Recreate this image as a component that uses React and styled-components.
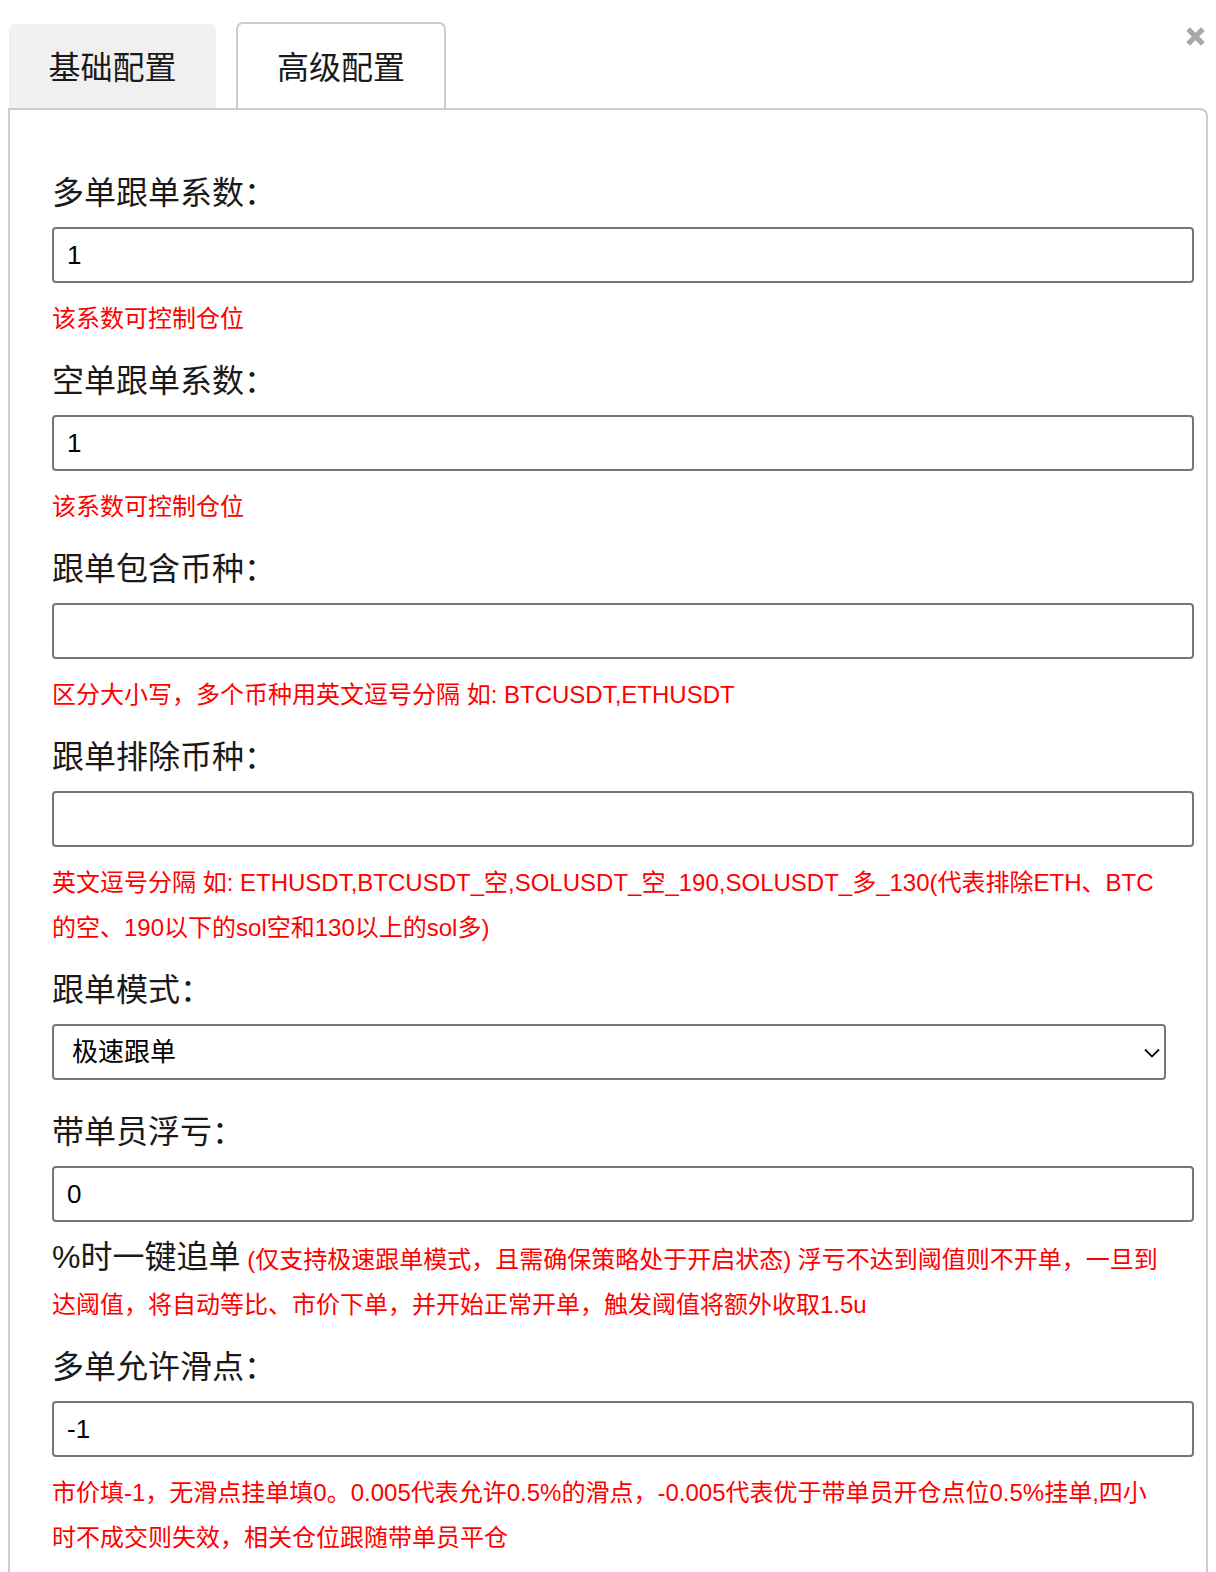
import React, { useState } from "react";
import styled, { createGlobalStyle } from "styled-components";

const GlobalStyle = createGlobalStyle`
  html, body {
    margin: 0;
    padding: 0;
    background: #fff;
  }
  body {
    font-family: "Liberation Sans", "Noto Sans CJK SC", sans-serif;
    color: #1a1a1a;
  }
`;

const Wrap = styled.div`
  position: relative;
  padding: 22px 8px 0 8px;
`;

const CloseBtn = styled.button`
  position: absolute;
  top: 26px;
  right: 10px;
  width: 21px;
  height: 21px;
  padding: 0;
  border: none;
  background: none;
  cursor: pointer;
`;

const Tabs = styled.div`
  display: flex;
  align-items: flex-end;
  gap: 20px;
  padding-left: 1px;
`;

const Tab = styled.div`
  box-sizing: border-box;
  display: flex;
  align-items: center;
  justify-content: center;
  width: ${(p) => (p.active ? "210px" : "207px")};
  height: ${(p) => (p.active ? "86px" : "84px")};
  padding-bottom: 2px;
  font-size: 32px;
  color: #1a1a1a;
  border-radius: 7px 7px 0 0;
  background: ${(p) => (p.active ? "#fff" : "#f0f0f0")};
  border: ${(p) => (p.active ? "2px solid #cccccc" : "none")};
  border-bottom: none;
  cursor: pointer;
`;

const Panel = styled.div`
  border: 2px solid #cccccc;
  border-bottom: none;
  border-top-right-radius: 8px;
  padding: 59px 40px 40px 42px;
`;

const Field = styled.div`
  margin-bottom: ${(p) => p.gap || 16}px;
`;

const Label = styled.div`
  font-size: 32px;
  line-height: 48px;
  margin-bottom: 10px;
  color: #1a1a1a;
`;

const Input = styled.input`
  display: block;
  box-sizing: border-box;
  width: calc(100% + 28px);
  height: 56px;
  padding: 0 13px;
  border: 2px solid #767676;
  border-radius: 4px;
  font-family: "Liberation Sans", "Noto Sans CJK SC", sans-serif;
  font-size: 26px;
  color: #000;
  background: #fff;
  outline: none;
`;

const SelectBox = styled.div`
  position: relative;
  width: 100%;
`;

const Select = styled.select`
  display: block;
  box-sizing: border-box;
  width: 100%;
  height: 56px;
  padding: 0 18px;
  border: 2px solid #767676;
  border-radius: 4px;
  appearance: none;
  font-family: "Liberation Sans", "Noto Sans CJK SC", sans-serif;
  font-size: 26px;
  color: #000;
  background: #fff;
  outline: none;
`;

const Chevron = styled.svg`
  position: absolute;
  right: 6px;
  top: 24px;
  pointer-events: none;
`;

const Hint = styled.div`
  margin-top: 13px;
  font-size: 24px;
  line-height: 45px;
  color: #ff0000;
`;

const Strong = styled.span`
  font-size: 32px;
  color: #1a1a1a;
`;

const fields = [
  { label: "多单跟单系数：", value: "1", hint: "该系数可控制仓位" },
  { label: "空单跟单系数：", value: "1", hint: "该系数可控制仓位" },
  {
    label: "跟单包含币种：",
    value: "",
    hint: "区分大小写，多个币种用英文逗号分隔 如: BTCUSDT,ETHUSDT",
  },
  {
    label: "跟单排除币种：",
    value: "",
    hint: "英文逗号分隔 如: ETHUSDT,BTCUSDT_空,SOLUSDT_空_190,SOLUSDT_多_130(代表排除ETH、BTC的空、190以下的sol空和130以上的sol多)",
  },
];

export default function App() {
  const [tab, setTab] = useState(1);
  const [mode, setMode] = useState("fast");

  return (
    <Wrap>
      <GlobalStyle />
      <CloseBtn aria-label="close">
        <svg width="21" height="21" viewBox="0 0 20 20">
          <path
            d="M3 3 L17 17 M17 3 L3 17"
            stroke="#a9a9a9"
            strokeWidth="5"
            strokeLinecap="butt"
          />
        </svg>
      </CloseBtn>

      <Tabs>
        <Tab active={tab === 0} onClick={() => setTab(0)}>
          基础配置
        </Tab>
        <Tab active={tab === 1} onClick={() => setTab(1)}>
          高级配置
        </Tab>
      </Tabs>

      <Panel>
        {fields.map((f) => (
          <Field key={f.label}>
            <Label>{f.label}</Label>
            <Input defaultValue={f.value} />
            <Hint>{f.hint}</Hint>
          </Field>
        ))}

        <Field gap={28}>
          <Label>跟单模式：</Label>
          <SelectBox>
            <Select value={mode} onChange={(e) => setMode(e.target.value)}>
              <option value="fast">极速跟单</option>
              <option value="normal">普通跟单</option>
            </Select>
            <Chevron width="16" height="10" viewBox="0 0 16 10">
              <path
                d="M1 1.5 L8 8.5 L15 1.5"
                fill="none"
                stroke="#111"
                strokeWidth="1.8"
              />
            </Chevron>
          </SelectBox>
        </Field>

        <Field>
          <Label>带单员浮亏：</Label>
          <Input defaultValue="0" />
          <Hint>
            <Strong>%时一键追单</Strong> (仅支持极速跟单模式，且需确保策略处于开启状态) 浮亏不达到阈值则不开单，一旦到达阈值，将自动等比、市价下单，并开始正常开单，触发阈值将额外收取1.5u
          </Hint>
        </Field>

        <Field>
          <Label>多单允许滑点：</Label>
          <Input defaultValue="-1" />
          <Hint>
            市价填-1，无滑点挂单填0。0.005代表允许0.5%的滑点，-0.005代表优于带单员开仓点位0.5%挂单,四小时不成交则失效，相关仓位跟随带单员平仓
          </Hint>
        </Field>
      </Panel>
    </Wrap>
  );
}
